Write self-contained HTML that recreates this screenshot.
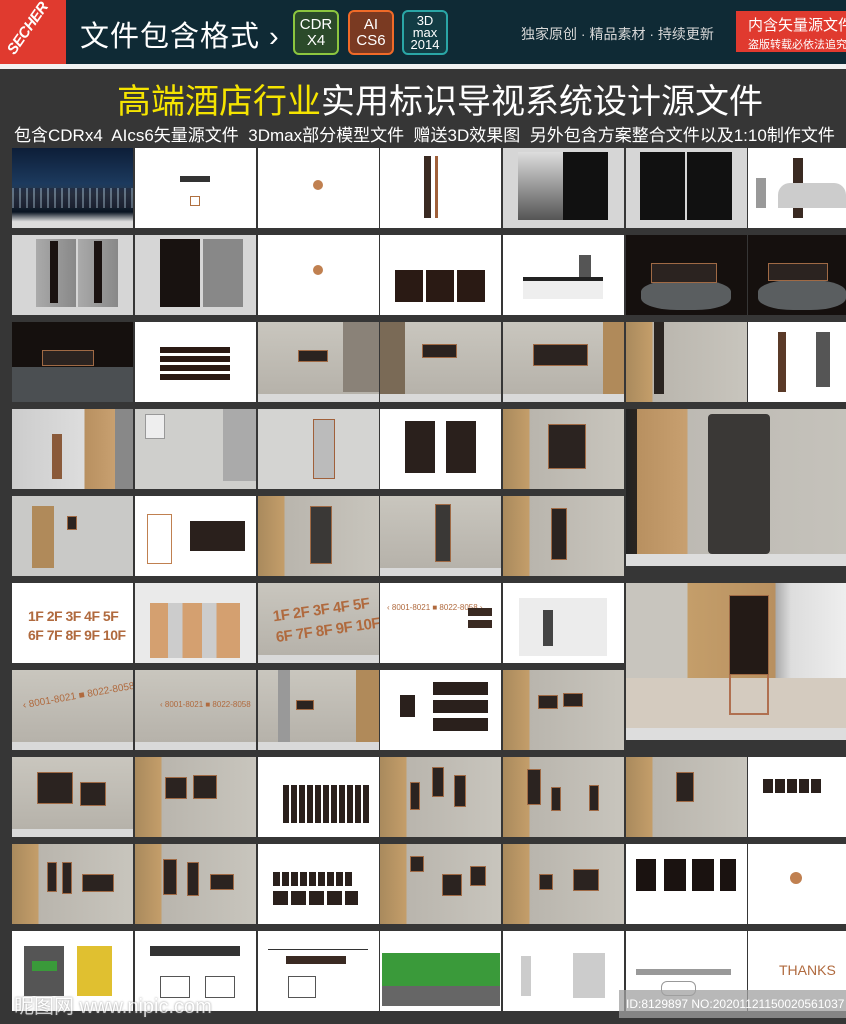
<!DOCTYPE html>
<html><head><meta charset="utf-8"><style>
*{margin:0;padding:0;box-sizing:border-box}
body{width:846px;height:1024px;overflow:hidden;background:#363636;font-family:"Liberation Sans","Noto Sans CJK SC",sans-serif;position:relative}
.hd{position:absolute;left:0;top:0;width:846px;height:64px;background:#0f2a35}
.wl{position:absolute;left:0;top:64px;width:846px;height:5px;background:#f2f2f2}
.logo{position:absolute;left:0;top:0;width:66px;height:64px;background:#e03a2f;overflow:hidden}
.logo span{position:absolute;left:-2px;top:20px;color:#fff;font-weight:bold;font-style:italic;font-size:15px;transform:rotate(-55deg);letter-spacing:-0.5px}
.t1{position:absolute;left:80px;top:13px;color:#fff;font-size:29px;letter-spacing:1px}
.bx{position:absolute;top:10px;height:45px;border:2px solid;border-radius:6px;color:#fff;text-align:center;font-size:15px;line-height:16px;padding-top:5px}
.c{position:absolute;width:121px;height:80px;overflow:hidden}
.w{background:#fff}
.wall{background:linear-gradient(#c9c6be,#b6b2aa 90%,#d9d9d9 90%)}
.wd{background:linear-gradient(90deg,#a98a5d 0,#c49e6a 22%,#b9b5ad 22%,#c8c5bd 100%)}
.dk{background:#15100e}
.gr{background:#d6d6d6}
.p{position:absolute;background:#2b2320;border:1px solid #a06a45}
.s{position:absolute;background:#3a2a22}
</style></head><body>
<div class="hd"></div>
<div class="logo"><span>SECHER</span></div>
<div class="t1">文件包含格式 ›</div>
<div class="bx" style="left:293px;width:46px;border-color:#8cc63f;background:#2b4a2a">CDR<br>X4</div>
<div class="bx" style="left:348px;width:46px;border-color:#f06a28;background:#7a3a22">AI<br>CS6</div>
<div class="bx" style="left:402px;width:46px;border-color:#2aa6a6;background:#123c44;font-size:13px;line-height:12px;padding-top:3px">3D<br>max<br>2014</div>
<div style="position:absolute;left:521px;top:24px;color:#d8d8d8;font-size:14px">独家原创 · 精品素材 · 持续更新</div>
<div style="position:absolute;left:736px;top:11px;width:110px;height:41px;background:#e03a2f;color:#fff;padding-left:12px;white-space:nowrap;overflow:hidden"><div style="font-size:15px;margin-top:3px">内含矢量源文件</div><div style="font-size:11px;margin-top:1px">盗版转载必依法追究</div></div>
<div class="wl"></div>
<div style="position:absolute;left:117px;top:74px;font-size:34px;color:#fff;white-space:nowrap"><span style="color:#f5e400">高端酒店行业</span>实用标识导视系统设计源文件</div>
<div style="position:absolute;left:14px;top:121px;font-size:17px;color:#fff;white-space:nowrap">包含CDRx4&nbsp; AIcs6矢量源文件&nbsp; 3Dmax部分模型文件&nbsp; 赠送3D效果图&nbsp; 另外包含方案整合文件以及1:10制作文件</div>

<!-- row1 -->
<div class="c" style="left:12px;top:148px;background:linear-gradient(#0d1e38,#1c3a5e 45%,#2a3a48 58%,#0a1422 80%,#ddd 92%)"><div style="position:absolute;left:0;top:40px;width:121px;height:20px;background:repeating-linear-gradient(90deg,#9ab 0 2px,#223 2px 7px);opacity:.5"></div></div>
<div class="c w" style="left:135px;top:148px"><div class="s" style="left:45px;top:28px;width:30px;height:6px;background:#333"></div><div style="position:absolute;left:55px;top:48px;width:10px;height:10px;border:1px solid #b07040"></div></div>
<div class="c w" style="left:258px;top:148px"><div style="position:absolute;left:55px;top:32px;width:10px;height:10px;border-radius:50%;background:#c08050"></div></div>
<div class="c w" style="left:380px;top:148px"><div class="s" style="left:44px;top:8px;width:7px;height:62px"></div><div class="s" style="left:55px;top:8px;width:3px;height:62px;background:#a0603a"></div></div>
<div class="c gr" style="left:503px;top:148px"><div class="s" style="left:15px;top:4px;width:45px;height:68px;background:linear-gradient(#ddd,#555)"></div><div class="s" style="left:60px;top:4px;width:45px;height:68px;background:#111"></div></div>
<div class="c gr" style="left:626px;top:148px"><div class="s" style="left:14px;top:4px;width:45px;height:68px;background:#111"></div><div class="s" style="left:61px;top:4px;width:45px;height:68px;background:#111"></div></div>
<div class="c w" style="left:748px;top:148px;width:98px"><div class="s" style="left:8px;top:30px;width:10px;height:30px;background:#999"></div><div class="s" style="left:45px;top:10px;width:10px;height:60px"></div><div style="position:absolute;left:30px;top:35px;width:68px;height:25px;background:#ccc;border-radius:12px 12px 0 0"></div></div>
<!-- row2 -->
<div class="c gr" style="left:12px;top:235px"><div class="s" style="left:24px;top:4px;width:40px;height:68px;background:linear-gradient(90deg,#aaa,#888)"></div><div class="s" style="left:66px;top:4px;width:40px;height:68px;background:linear-gradient(90deg,#aaa,#888)"></div><div class="s" style="left:38px;top:6px;width:8px;height:62px;background:#1a1210"></div><div class="s" style="left:82px;top:6px;width:8px;height:62px;background:#1a1210"></div></div>
<div class="c gr" style="left:135px;top:235px"><div class="s" style="left:25px;top:4px;width:40px;height:68px;background:#181210"></div><div class="s" style="left:68px;top:4px;width:40px;height:68px;background:#888"></div></div>
<div class="c w" style="left:258px;top:235px"><div style="position:absolute;left:55px;top:30px;width:10px;height:10px;border-radius:50%;background:#c08050"></div></div>
<div class="c w" style="left:380px;top:235px"><div class="s" style="left:15px;top:35px;width:90px;height:32px;background:repeating-linear-gradient(90deg,#2a1a14 0 28px,#fff 28px 31px)"></div></div>
<div class="c w" style="left:503px;top:235px"><div style="position:absolute;left:20px;top:42px;width:80px;height:22px;background:#eee;border-top:4px solid #222"></div><div class="s" style="left:76px;top:20px;width:12px;height:22px;background:#555"></div></div>
<div class="c dk" style="left:626px;top:235px"><div style="position:absolute;left:15px;top:45px;width:90px;height:30px;background:#5a5e60;border-radius:40%"></div><div class="p" style="left:25px;top:28px;width:66px;height:20px"></div></div>
<div class="c dk" style="left:748px;top:235px;width:98px"><div style="position:absolute;left:10px;top:45px;width:88px;height:30px;background:#5a5e60;border-radius:40%"></div><div class="p" style="left:20px;top:28px;width:60px;height:18px"></div></div>
<!-- row3 -->
<div class="c dk" style="left:12px;top:322px"><div style="position:absolute;left:0;top:45px;width:121px;height:35px;background:#4b4f52"></div><div class="p" style="left:30px;top:28px;width:52px;height:16px"></div></div>
<div class="c w" style="left:135px;top:322px"><div class="s" style="left:25px;top:25px;width:70px;height:36px;background:repeating-linear-gradient(#2a1a14 0 6px,#fff 6px 9px)"></div></div>
<div class="c wall" style="left:258px;top:322px"><div class="s" style="left:85px;top:0;width:36px;height:70px;background:#8a8278"></div><div class="p" style="left:40px;top:28px;width:30px;height:12px"></div></div>
<div class="c wall" style="left:380px;top:322px"><div class="s" style="left:0;top:0;width:25px;height:72px;background:#7a6a56"></div><div class="p" style="left:42px;top:22px;width:35px;height:14px"></div></div>
<div class="c wall" style="left:503px;top:322px"><div class="s" style="left:100px;top:0;width:21px;height:72px;background:#b08a5a"></div><div class="p" style="left:30px;top:22px;width:55px;height:22px"></div></div>
<div class="c wd" style="left:626px;top:322px"><div class="s" style="left:28px;top:0;width:10px;height:72px;background:#2a2420"></div></div>
<div class="c w" style="left:748px;top:322px;width:98px"><div class="s" style="left:30px;top:10px;width:8px;height:60px;background:#5a3a28"></div><div class="s" style="left:68px;top:10px;width:14px;height:55px;background:#555"></div></div>
<!-- row4 -->
<div class="c" style="left:12px;top:409px;background:linear-gradient(90deg,#ccc 0,#ddd 60%,#b89060 60%,#c8a070 85%,#888 85%)"><div class="s" style="left:40px;top:25px;width:10px;height:45px;background:#8a5a3a"></div></div>
<div class="c" style="left:135px;top:409px;background:#cfcfcc"><div class="s" style="left:10px;top:5px;width:20px;height:25px;background:#eee;border:1px solid #999"></div><div class="s" style="left:88px;top:0;width:33px;height:72px;background:#aaa"></div></div>
<div class="c" style="left:258px;top:409px;background:#d4d4d2"><div class="s" style="left:55px;top:10px;width:22px;height:60px;background:#bbb;border:1px solid #a0603a"></div></div>
<div class="c w" style="left:380px;top:409px"><div class="s" style="left:25px;top:12px;width:30px;height:52px;background:#2a201c"></div><div class="s" style="left:66px;top:12px;width:30px;height:52px;background:#2a201c"></div></div>
<div class="c wd" style="left:503px;top:409px"><div class="p" style="left:45px;top:15px;width:38px;height:45px"></div></div>
<div class="c" style="left:626px;top:409px;width:220px;height:157px;background:linear-gradient(90deg,#222 0,#2a2420 5%,#b89060 5%,#c8a070 28%,#bdbab3 28%,#c5c2bb 100%)"><div style="position:absolute;left:0;top:145px;width:220px;height:12px;background:#ddd"></div><div class="p" style="left:82px;top:5px;width:62px;height:140px;background:#3a3836;border:none;border-radius:4px"></div></div>
<!-- row5 -->
<div class="c" style="left:12px;top:496px;background:#c9c9c7"><div class="s" style="left:20px;top:10px;width:22px;height:62px;background:#b08a5a"></div><div class="p" style="left:55px;top:20px;width:10px;height:14px"></div></div>
<div class="c w" style="left:135px;top:496px"><div class="s" style="left:12px;top:18px;width:25px;height:50px;background:#fff;border:1px solid #c08050"></div><div class="s" style="left:55px;top:25px;width:55px;height:30px;background:#2a201c"></div></div>
<div class="c wd" style="left:258px;top:496px"><div class="p" style="left:52px;top:10px;width:22px;height:58px;background:#3a3836"></div></div>
<div class="c wall" style="left:380px;top:496px"><div class="p" style="left:55px;top:8px;width:16px;height:58px;background:#3a3836"></div></div>
<div class="c wd" style="left:503px;top:496px"><div class="p" style="left:48px;top:12px;width:16px;height:52px"></div></div>
<!-- row6 -->
<div class="c w" style="left:12px;top:583px"><div style="position:absolute;left:16px;top:24px;color:#b06a3e;font-weight:bold;font-size:14px;line-height:19px;letter-spacing:-0.5px;white-space:nowrap">1F 2F 3F 4F 5F<br>6F 7F 8F 9F 10F</div></div>
<div class="c" style="left:135px;top:583px;background:#eaeaea"><div class="s" style="left:15px;top:20px;width:90px;height:55px;background:linear-gradient(90deg,#d4a070 0 20%,#ccc 20% 36%,#d4a070 36% 58%,#ccc 58% 74%,#d4a070 74%)"></div></div>
<div class="c wall" style="left:258px;top:583px"><div style="position:absolute;left:16px;top:16px;color:#b06a3e;font-weight:bold;font-size:15px;line-height:21px;letter-spacing:-0.5px;transform:rotate(-8deg);white-space:nowrap">1F 2F 3F 4F 5F<br>6F 7F 8F 9F 10F</div></div>
<div class="c w" style="left:380px;top:583px"><div style="position:absolute;left:7px;top:20px;font-size:8px;color:#b06a3e;white-space:nowrap">‹ 8001-8021 ■ 8022-8058 ›</div><div class="s" style="left:88px;top:25px;width:24px;height:8px"></div><div class="s" style="left:88px;top:37px;width:24px;height:8px"></div></div>
<div class="c w" style="left:503px;top:583px"><div style="position:absolute;left:16px;top:15px;width:88px;height:58px;background:#ececec"></div><div class="s" style="left:40px;top:27px;width:10px;height:36px;background:#444"></div></div>
<div class="c" style="left:626px;top:583px;width:220px;height:157px;background:linear-gradient(90deg,#c8c5be 0,#c8c5be 28%,#c49e6a 28%,#b89060 68%,#aaa 68%,#ddd 75%,#eee 100%)"><div style="position:absolute;left:0;top:95px;width:220px;height:50px;background:#d4cbbf"></div><div style="position:absolute;left:0;top:145px;width:220px;height:12px;background:#ddd"></div><div class="p" style="left:103px;top:12px;width:40px;height:80px;background:#231a16"></div><div class="s" style="left:103px;top:92px;width:40px;height:40px;background:none;border:2px solid #b07050;border-top:none"></div></div>
<!-- row7 -->
<div class="c wall" style="left:12px;top:670px"><div style="position:absolute;left:10px;top:20px;font-size:10px;color:#b06a3e;transform:rotate(-10deg);white-space:nowrap">‹ 8001-8021 ■ 8022-8058 ›</div></div>
<div class="c wall" style="left:135px;top:670px"><div style="position:absolute;left:25px;top:30px;font-size:8px;color:#b06a3e;white-space:nowrap">‹ 8001-8021 ■ 8022-8058</div></div>
<div class="c wall" style="left:258px;top:670px"><div class="s" style="left:20px;top:0;width:12px;height:72px;background:#999"></div><div class="s" style="left:98px;top:0;width:23px;height:72px;background:#b08a5a"></div><div class="p" style="left:38px;top:30px;width:18px;height:10px"></div></div>
<div class="c w" style="left:380px;top:670px"><div class="s" style="left:20px;top:25px;width:15px;height:22px;background:#2a201c"></div><div class="s" style="left:53px;top:12px;width:55px;height:52px;background:repeating-linear-gradient(#2a201c 0 13px,#fff 13px 18px)"></div></div>
<div class="c wd" style="left:503px;top:670px"><div class="p" style="left:35px;top:25px;width:20px;height:14px"></div><div class="p" style="left:60px;top:23px;width:20px;height:14px"></div></div>
<!-- row8 -->
<div class="c wall" style="left:12px;top:757px"><div class="p" style="left:25px;top:15px;width:36px;height:32px"></div><div class="p" style="left:68px;top:25px;width:26px;height:24px"></div></div>
<div class="c wd" style="left:135px;top:757px"><div class="p" style="left:30px;top:20px;width:22px;height:22px"></div><div class="p" style="left:58px;top:18px;width:24px;height:24px"></div></div>
<div class="c w" style="left:258px;top:757px"><div class="s" style="left:25px;top:28px;width:88px;height:38px;background:repeating-linear-gradient(90deg,#2a201c 0 6px,#fff 6px 8px)"></div></div>
<div class="c wd" style="left:380px;top:757px"><div class="p" style="left:30px;top:25px;width:10px;height:28px"></div><div class="p" style="left:52px;top:10px;width:12px;height:30px"></div><div class="p" style="left:74px;top:18px;width:12px;height:32px"></div></div>
<div class="c wd" style="left:503px;top:757px"><div class="p" style="left:24px;top:12px;width:14px;height:36px"></div><div class="p" style="left:48px;top:30px;width:10px;height:24px"></div><div class="p" style="left:86px;top:28px;width:10px;height:26px"></div></div>
<div class="c wd" style="left:626px;top:757px"><div class="p" style="left:50px;top:15px;width:18px;height:30px"></div></div>
<div class="c w" style="left:748px;top:757px;width:98px"><div class="s" style="left:15px;top:22px;width:60px;height:14px;background:repeating-linear-gradient(90deg,#2a201c 0 10px,#fff 10px 12px)"></div></div>
<!-- row9 -->
<div class="c wd" style="left:12px;top:844px"><div class="p" style="left:35px;top:18px;width:10px;height:30px"></div><div class="p" style="left:50px;top:18px;width:10px;height:32px"></div><div class="p" style="left:70px;top:30px;width:32px;height:18px"></div></div>
<div class="c wd" style="left:135px;top:844px"><div class="p" style="left:28px;top:15px;width:14px;height:36px"></div><div class="p" style="left:52px;top:18px;width:12px;height:34px"></div><div class="p" style="left:75px;top:30px;width:24px;height:16px"></div></div>
<div class="c w" style="left:258px;top:844px"><div class="s" style="left:15px;top:28px;width:80px;height:14px;background:repeating-linear-gradient(90deg,#2a201c 0 7px,#fff 7px 9px)"></div><div class="s" style="left:15px;top:47px;width:85px;height:14px;background:repeating-linear-gradient(90deg,#2a201c 0 15px,#fff 15px 18px)"></div></div>
<div class="c wd" style="left:380px;top:844px"><div class="p" style="left:30px;top:12px;width:14px;height:16px"></div><div class="p" style="left:62px;top:30px;width:20px;height:22px"></div><div class="p" style="left:90px;top:22px;width:16px;height:20px"></div></div>
<div class="c wd" style="left:503px;top:844px"><div class="p" style="left:36px;top:30px;width:14px;height:16px"></div><div class="p" style="left:70px;top:25px;width:26px;height:22px"></div></div>
<div class="c w" style="left:626px;top:844px"><div class="s" style="left:10px;top:15px;width:20px;height:32px;background:#1a1210"></div><div class="s" style="left:38px;top:15px;width:22px;height:32px;background:#1a1210"></div><div class="s" style="left:66px;top:15px;width:22px;height:32px;background:#1a1210"></div><div class="s" style="left:94px;top:15px;width:16px;height:32px;background:#1a1210"></div></div>
<div class="c w" style="left:748px;top:844px;width:98px"><div style="position:absolute;left:42px;top:28px;width:12px;height:12px;border-radius:50%;background:#c08050"></div></div>
<!-- row10 -->
<div class="c w" style="left:12px;top:931px"><div class="s" style="left:12px;top:15px;width:40px;height:50px;background:#555"></div><div class="s" style="left:65px;top:15px;width:35px;height:50px;background:#e0c030"></div><div class="s" style="left:20px;top:30px;width:25px;height:10px;background:#3a9a3a"></div></div>
<div class="c w" style="left:135px;top:931px"><div class="s" style="left:15px;top:15px;width:90px;height:10px;background:#333"></div><div style="position:absolute;left:25px;top:45px;width:30px;height:22px;border:1px solid #555"></div><div style="position:absolute;left:70px;top:45px;width:30px;height:22px;border:1px solid #555"></div></div>
<div class="c w" style="left:258px;top:931px"><div class="s" style="left:10px;top:18px;width:100px;height:1px;background:#333"></div><div class="s" style="left:28px;top:25px;width:60px;height:8px"></div><div style="position:absolute;left:30px;top:45px;width:28px;height:22px;border:1px solid #555"></div></div>
<div class="c w" style="left:380px;top:931px"><div class="s" style="left:2px;top:22px;width:118px;height:33px;background:#3a9a3a"></div><div class="s" style="left:2px;top:55px;width:118px;height:20px;background:#666"></div></div>
<div class="c w" style="left:503px;top:931px"><div class="s" style="left:18px;top:25px;width:10px;height:40px;background:#ccc"></div><div class="s" style="left:70px;top:22px;width:32px;height:45px;background:#ccc"></div></div>
<div class="c w" style="left:626px;top:931px"><div class="s" style="left:10px;top:38px;width:95px;height:6px;background:#999"></div><div style="position:absolute;left:35px;top:50px;width:35px;height:15px;border:1px solid #999;border-radius:6px"></div></div>
<div class="c w" style="left:748px;top:931px;width:98px"><div style="position:absolute;left:31px;top:31px;color:#b06a3e;font-size:14px">THANKS</div></div>
<div style="position:absolute;left:14px;top:990px;color:#fff;font-size:20px;opacity:.75;white-space:nowrap;text-shadow:0 0 2px #666">昵图网 www.nipic.com</div>
<div style="position:absolute;left:619px;top:990px;width:227px;height:28px;background:rgba(160,160,160,.75);color:#fff;font-size:12px;line-height:28px;padding-left:7px;white-space:nowrap">ID:8129897 NO:20201121150020561037</div>
</body></html>
